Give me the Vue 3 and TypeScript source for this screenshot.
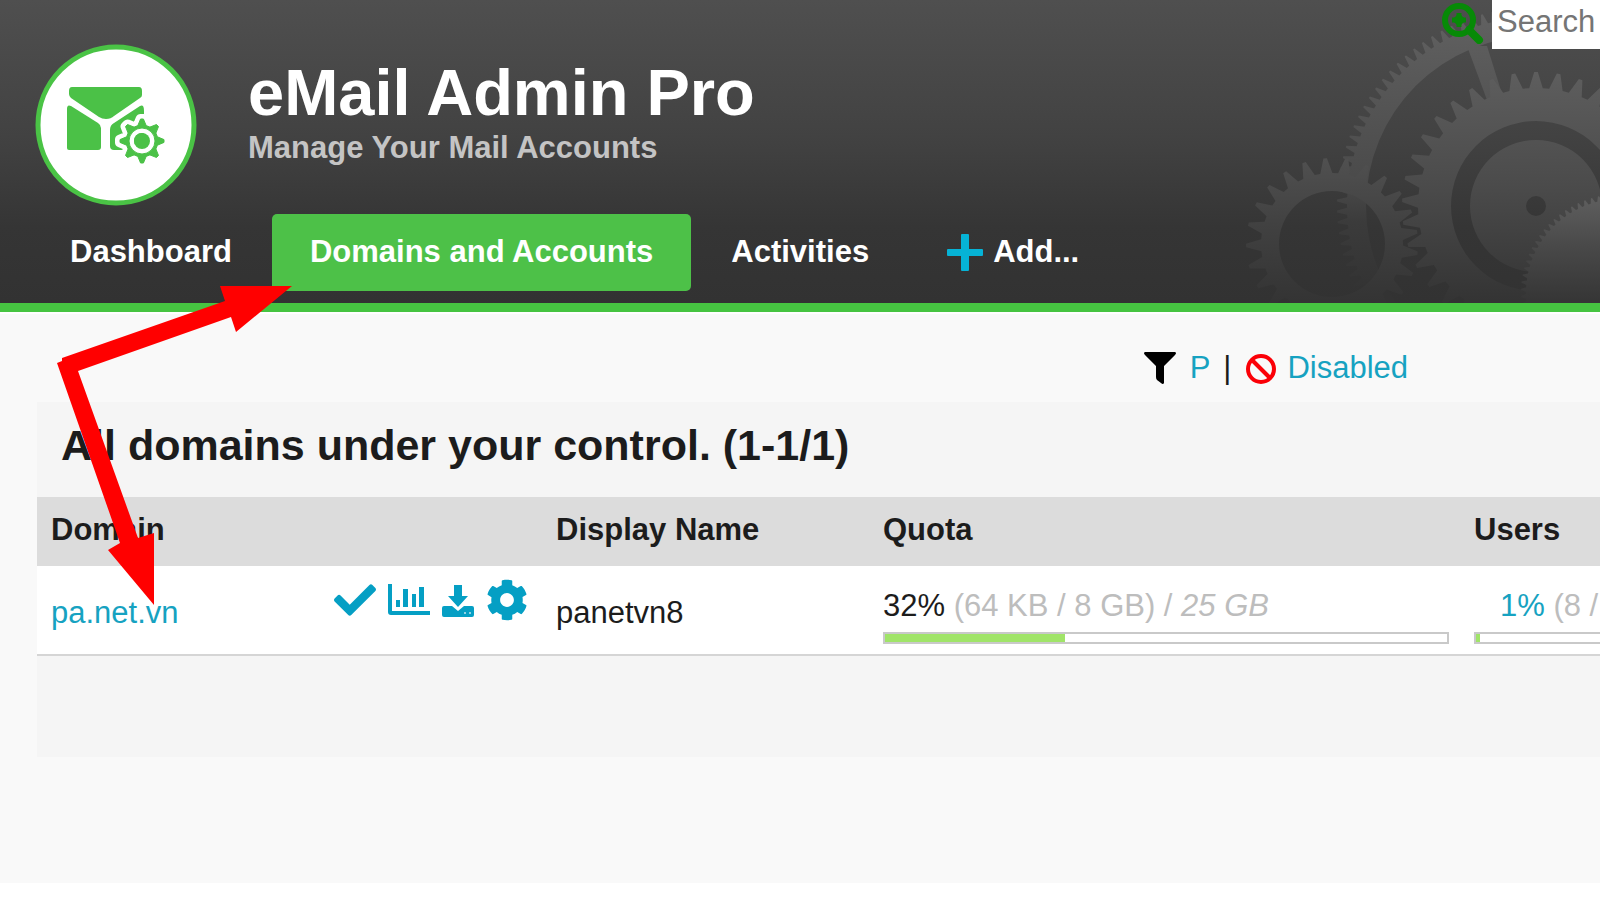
<script setup lang="ts">
import { ref } from 'vue'

interface DomainRow {
  name: string
  display: string
  quotaPercent: number
  quotaUsed: string
  quotaTotal: string
  usersPercent: number
  usersDetail: string
}

const query = ref('')

const domains: DomainRow[] = [
  {
    name: 'pa.net.vn',
    display: 'panetvn8',
    quotaPercent: 32,
    quotaUsed: '(64 KB / 8 GB) /',
    quotaTotal: '25 GB',
    usersPercent: 1,
    usersDetail: '(8 /',
  },
]

const circle = (cx: number, cy: number, r: number): string =>
  `M${cx - r} ${cy}a${r} ${r} 0 1 0 ${2 * r} 0a${r} ${r} 0 1 0 ${-2 * r} 0Z`

// Toothed outline: each tooth rises from the root circle to the tip circle.
function gear(cx: number, cy: number, root: number, tip: number, teeth: number, phase = 0): string {
  const step = (Math.PI * 2) / teeth
  const points: string[] = []
  for (let i = 0; i < teeth; i++) {
    const mid = i * step + phase - Math.PI / 2
    const corners: [number, number][] = [
      [root, -0.34],
      [tip, -0.08],
      [tip, 0.08],
      [root, 0.34],
    ]
    for (const [r, offset] of corners) {
      const a = mid + offset * step
      points.push(`${(cx + r * Math.cos(a)).toFixed(1)} ${(cy + r * Math.sin(a)).toFixed(1)}`)
    }
  }
  return `M${points.join('L')}Z`
}

const outerRing = gear(316, 206, 189, 199, 114) + circle(316, 206, 170)
const largeGear = gear(316, 206, 118, 134, 37) + circle(316, 206, 85)
const largeDisc = circle(316, 206, 66) + circle(316, 206, 10)
const smallGear = gear(112, 244, 71, 86, 25, -0.08) + circle(112, 244, 53)
const cornerGear = gear(400, 293, 94, 99, 86)
const logoGear = gear(107, 97, 16, 22, 8) + circle(107, 97, 13)
</script>

<template>
  <div class="page">
    <header class="header">
      <svg class="gears" viewBox="0 0 380 303" aria-hidden="true">
        <defs>
          <linearGradient id="metal" gradientUnits="userSpaceOnUse" x1="0" y1="70" x2="0" y2="300">
            <stop offset="0" stop-color="#5e5e5e" />
            <stop offset="0.5" stop-color="#4b4b4b" />
            <stop offset="1" stop-color="#343434" />
          </linearGradient>
          <linearGradient id="metal-dim" gradientUnits="userSpaceOnUse" x1="0" y1="150" x2="0" y2="300">
            <stop offset="0" stop-color="#525252" />
            <stop offset="0.5" stop-color="#414141" />
            <stop offset="1" stop-color="#343434" />
          </linearGradient>
          <linearGradient id="metal-ring" gradientUnits="userSpaceOnUse" x1="0" y1="20" x2="0" y2="290">
            <stop offset="0" stop-color="#606060" />
            <stop offset="0.6" stop-color="#4a4a4a" />
            <stop offset="0.75" stop-color="#3b3b3b" />
            <stop offset="1" stop-color="#333333" />
          </linearGradient>
          <linearGradient id="metal-corner" gradientUnits="userSpaceOnUse" x1="0" y1="198" x2="0" y2="300">
            <stop offset="0" stop-color="#5e5e5e" />
            <stop offset="0.5" stop-color="#484848" />
            <stop offset="1" stop-color="#363636" />
          </linearGradient>
        </defs>
        <path :d="outerRing" fill="url(#metal-ring)" fill-rule="evenodd" />
        <path d="M247 46 267 46 282 94 267 100Z" fill="url(#metal-ring)" />
        <path :d="smallGear" fill="url(#metal-dim)" fill-rule="evenodd" />
        <path :d="largeGear" fill="url(#metal)" fill-rule="evenodd" />
        <path :d="largeDisc" fill="url(#metal)" fill-rule="evenodd" />
        <path :d="cornerGear" fill="url(#metal-corner)" />
      </svg>

      <div class="brand">
        <svg class="logo" viewBox="0 0 162 162" role="img" aria-label="eMail Admin Pro">
          <circle cx="81" cy="81" r="78" fill="#fff" stroke="#4ac345" stroke-width="5" />
          <g fill="#4bc147">
            <path d="M37 43H104Q107 43 107 47V51Q107 53 105 54L79 72Q76 75 71 75Q67 75 64 73L36 54Q34 52 34 50V47Q34 43 37 43Z" />
            <path d="M32 65Q32 60 36 62L63 79Q66 81 66 84V103Q66 106 63 106H34Q32 106 32 104Z" />
            <path d="M75 86Q75 81 79 79L105 62Q109 60 109 67V90L95 106H79Q75 106 75 102Z" />
          </g>
          <path :d="logoGear" fill="#fff" stroke="#fff" stroke-width="10" stroke-linejoin="round" />
          <path :d="logoGear" fill="#4bc147" fill-rule="evenodd" stroke="#4bc147" stroke-width="1" stroke-linejoin="round" />
          <circle cx="107" cy="97" r="8" fill="#4bc147" />
        </svg>
        <div class="titles">
          <h1>eMail Admin Pro</h1>
          <p>Manage Your Mail Accounts</p>
        </div>
        <form class="search" role="search" @submit.prevent>
          <button type="submit" aria-label="Search">
            <svg width="44" height="44" viewBox="0 0 44 44" fill="none" stroke="#078a07">
              <circle cx="19" cy="20" r="14" stroke-width="6" />
              <path d="M29 30 39 40" stroke-width="8" stroke-linecap="round" />
              <path d="M19 13V27M12 20H26" stroke-width="5" />
              <path d="M19 13 26 20 19 27 12 20Z" fill="#078a07" stroke="none" />
            </svg>
          </button>
          <input v-model="query" type="text" placeholder="Search" aria-label="Search text" />
        </form>
      </div>

      <nav class="tabs">
        <a href="#dashboard">Dashboard</a>
        <a href="#domains" class="active" aria-current="page">Domains and Accounts</a>
        <a href="#activities">Activities</a>
        <a href="#add">
          <svg width="36" height="40" viewBox="0 0 36 40" fill="#06b3d6" aria-hidden="true">
            <path d="M15 2H21Q22 2 22 3V17H35Q36 17 36 18V23Q36 24 35 24H22V38Q22 39 21 39H15Q14 39 14 38V24H1Q0 24 0 23V18Q0 17 1 17H14V3Q14 2 15 2Z" />
          </svg>
          Add...
        </a>
      </nav>
    </header>

    <main class="content">
      <div class="filters">
        <svg width="32" height="32" viewBox="0 0 32 32" aria-hidden="true">
          <path d="M1 0H31Q33 1 31 3L20 14V31Q19 33 17 31L13 28Q12 27 12 25V14L1 3Q-1 1 1 0Z" />
        </svg>
        <a href="#p" class="filter-p">P</a>
        <span class="bar">|</span>
        <svg width="32" height="32" viewBox="0 0 32 32" fill="none" stroke="#fb0007" stroke-width="4" aria-hidden="true">
          <circle cx="16" cy="17" r="13" />
          <path d="M7 8 25 26" />
        </svg>
        <a href="#disabled" class="filter-disabled">Disabled</a>
      </div>

      <section class="panel">
        <h2>All domains under your control. (1-1/1)</h2>
        <table>
          <colgroup>
            <col class="col-domain" />
            <col class="col-display" />
            <col class="col-quota" />
            <col />
          </colgroup>
          <thead>
            <tr>
              <th scope="col">Domain</th>
              <th scope="col">Display Name</th>
              <th scope="col">Quota</th>
              <th scope="col">Users</th>
            </tr>
          </thead>
          <tbody>
            <tr v-for="row in domains" :key="row.name">
              <td>
                <div class="domain">
                  <a href="#domain">{{ row.name }}</a>
                  <div class="actions">
                    <button type="button" aria-label="Activate">
                      <svg width="42" height="42" viewBox="0 0 512 512" fill="currentColor">
                        <path d="M173.898 439.404l-166.4-166.4c-9.997-9.997-9.997-26.206 0-36.204l36.203-36.204c9.997-9.998 26.207-9.998 36.204 0L192 312.69 432.095 72.596c9.997-9.997 26.207-9.997 36.204 0l36.203 36.204c9.997 9.997 9.997 26.206 0 36.204l-294.4 294.401c-9.998 9.997-26.207 9.997-36.204-.001z" />
                      </svg>
                    </button>
                    <button type="button" aria-label="Statistics">
                      <svg width="42" height="42" viewBox="0 0 42 42" fill="currentColor">
                        <path d="M0 5H4V32H42V36H3Q0 36 0 33Z" />
                        <path d="M8 21H12V28H8ZM15 10H20V28H15ZM24 15H28V28H24ZM31 8H36V28H31Z" />
                      </svg>
                    </button>
                    <button type="button" aria-label="Download">
                      <svg width="32" height="42" viewBox="0 0 32 42" fill="currentColor">
                        <path d="M12 6H20V17H26L16 28 6 17H12Z" />
                        <path d="M2 27H10L16 32 22 27H30Q32 27 32 29V36Q32 38 30 38H2Q0 38 0 36V29Q0 27 2 27Z" />
                        <path d="M22 34H24M27 34H29" stroke="#8fd3e5" stroke-width="2" />
                      </svg>
                    </button>
                    <button type="button" aria-label="Settings">
                      <svg width="42" height="42" viewBox="0 0 512 512" fill="currentColor">
                        <path d="M487.4 315.7l-42.6-24.6c4.3-23.2 4.3-47 0-70.2l42.6-24.6c4.9-2.8 7.1-8.6 5.5-14-11.1-35.6-30-67.8-54.7-94.6-3.8-4.1-10-5.1-14.8-2.3L380.8 110c-17.9-15.4-38.5-27.3-60.8-35.1V25.8c0-5.6-3.9-10.5-9.4-11.7-36.7-8.2-74.3-7.8-109.2 0-5.5 1.2-9.4 6.1-9.4 11.7V75c-22.2 7.9-42.8 19.8-60.8 35.1L88.7 85.5c-4.9-2.8-11-1.9-14.8 2.3-24.7 26.7-43.6 58.9-54.7 94.6-1.7 5.4.6 11.2 5.5 14L67.3 221c-4.3 23.2-4.3 47 0 70.2l-42.6 24.6c-4.9 2.8-7.1 8.6-5.5 14 11.1 35.6 30 67.8 54.7 94.6 3.8 4.1 10 5.1 14.8 2.3l42.6-24.6c17.9 15.4 38.5 27.3 60.8 35.1v49.2c0 5.6 3.9 10.5 9.4 11.7 36.7 8.2 74.3 7.8 109.2 0 5.5-1.2 9.4-6.1 9.4-11.7v-49.2c22.2-7.9 42.8-19.8 60.8-35.1l42.6 24.6c4.9 2.8 11 1.9 14.8-2.3 24.7-26.7 43.6-58.9 54.7-94.6 1.5-5.5-.7-11.3-5.6-14.1zM256 340c-46 0-84-38-84-84s38-84 84-84 84 38 84 84-38 84-84 84z" />
                      </svg>
                    </button>
                  </div>
                </div>
              </td>
              <td>{{ row.display }}</td>
              <td class="usage">
                <div class="usage-text">
                  {{ row.quotaPercent }}% <span class="muted">{{ row.quotaUsed }} <em>{{ row.quotaTotal }}</em></span>
                </div>
                <div class="meter"><div class="fill" :style="{ width: row.quotaPercent + '%' }"></div></div>
              </td>
              <td class="usage users">
                <div class="usage-text">
                  <a href="#users">{{ row.usersPercent }}%</a> <span class="muted">{{ row.usersDetail }}</span>
                </div>
                <div class="meter"><div class="fill" :style="{ width: row.usersPercent + '%' }"></div></div>
              </td>
            </tr>
          </tbody>
        </table>
      </section>
    </main>

    <svg class="arrows" width="160" height="610" viewBox="0 0 160 610" aria-hidden="true">
      <path d="M62 358 225 301 220 286H292L236 332 231 317 78 371 138 538 154 533V605L108 550 120 543 57 363 62 361Z" fill="#ff0000" />
    </svg>
  </div>
</template>

<style>
body {
  margin: 0;
  background: #ffffff;
}
</style>

<style scoped>
.page {
  position: relative;
  overflow: hidden;
  font-family: "Liberation Sans", Arial, sans-serif;
  font-size: 31px;
  line-height: 36px;
  color: #1c1c1c;
}

a {
  color: #16a2c1;
  text-decoration: none;
}

button {
  display: flex;
  padding: 0;
  border: 0;
  background: none;
  color: #059fc4;
  cursor: pointer;
}

svg {
  display: block;
  flex: none;
}

.header {
  position: relative;
  border-bottom: 9px solid #46c441;
  background: linear-gradient(#4f4f4f 0, #424242 45%, #353535 75%, #323232 100%);
}

.gears {
  position: absolute;
  right: 0;
  bottom: 0;
  width: 380px;
  height: 303px;
}

.brand {
  position: relative;
  display: flex;
  align-items: flex-start;
  padding-left: 35px;
}

.logo {
  width: 162px;
  height: 162px;
  margin-top: 44px;
}

.titles {
  margin: 56px 0 0 51px;
  font-weight: bold;
  white-space: nowrap;
}

h1 {
  margin: 0;
  font-size: 65px;
  line-height: 74px;
  color: #ffffff;
}

.titles p {
  margin: 0;
  color: #c4c4c4;
}

.search {
  display: flex;
  gap: 8px;
  margin-left: auto;
}

.search input {
  box-sizing: border-box;
  width: 108px;
  height: 49px;
  padding: 0 0 6px 5px;
  border: 0;
  border-radius: 0;
  background: #ffffff;
  font: inherit;
  color: #333333;
}

.search input::placeholder {
  color: #757575;
}

.tabs {
  position: relative;
  display: flex;
  gap: 2px;
  padding: 8px 32px 12px;
}

.tabs a {
  box-sizing: border-box;
  display: flex;
  align-items: center;
  gap: 10px;
  height: 77px;
  padding: 0 38px 2px;
  border-radius: 5px;
  font-weight: bold;
  color: #ffffff;
}

.tabs a.active {
  background: #4dc148;
}

.content {
  padding: 36px 0 126px 37px;
  border-top: 2px solid #ffffff;
  background: #f9f9f9;
}

.filters {
  display: flex;
  align-items: center;
  justify-content: flex-end;
  padding-right: 192px;
}

.filter-p {
  margin-left: 14px;
}

.bar {
  margin: 0 14px 0 13px;
}

.filter-disabled {
  margin-left: 10px;
}

.panel {
  margin-top: 16px;
  padding-bottom: 101px;
  background: #f5f5f5;
}

h2 {
  margin: 0;
  padding: 18px 24px 27px;
  font-size: 43px;
  line-height: 50px;
}

table {
  width: 100%;
  table-layout: fixed;
  border-collapse: collapse;
}

.col-domain {
  width: 505px;
}

.col-display {
  width: 327px;
}

.col-quota {
  width: 591px;
}

th,
td {
  padding: 0 0 0 14px;
  text-align: left;
}

th {
  height: 69px;
  padding-bottom: 3px;
  box-sizing: border-box;
  background: #dcdcdc;
}

td {
  box-sizing: border-box;
  height: 89px;
  padding-top: 6px;
  border-bottom: 2px solid #d5d5d5;
  background: #ffffff;
}

.domain {
  display: flex;
  align-items: center;
  justify-content: space-between;
  padding-right: 14px;
}

.actions {
  display: flex;
  gap: 12px;
  margin-bottom: 26px;
}

.usage {
  padding-top: 12px;
  padding-right: 11px;
}

.usage-text {
  margin-bottom: 8px;
  white-space: nowrap;
}

.muted {
  color: #bdbdbd;
}

.meter {
  height: 8px;
  border: 2px solid #c9c9c9;
  background: #ffffff;
}

.fill {
  height: 8px;
  min-width: 4px;
  background: #a0e468;
}

.users {
  padding-right: 0;
  padding-left: 0;
}

.users .usage-text {
  padding-left: 40px;
}

.users .meter {
  margin: 0 -20px 0 14px;
}

.arrows {
  position: absolute;
  top: 0;
  left: 0;
  overflow: visible;
  pointer-events: none;
}
</style>
